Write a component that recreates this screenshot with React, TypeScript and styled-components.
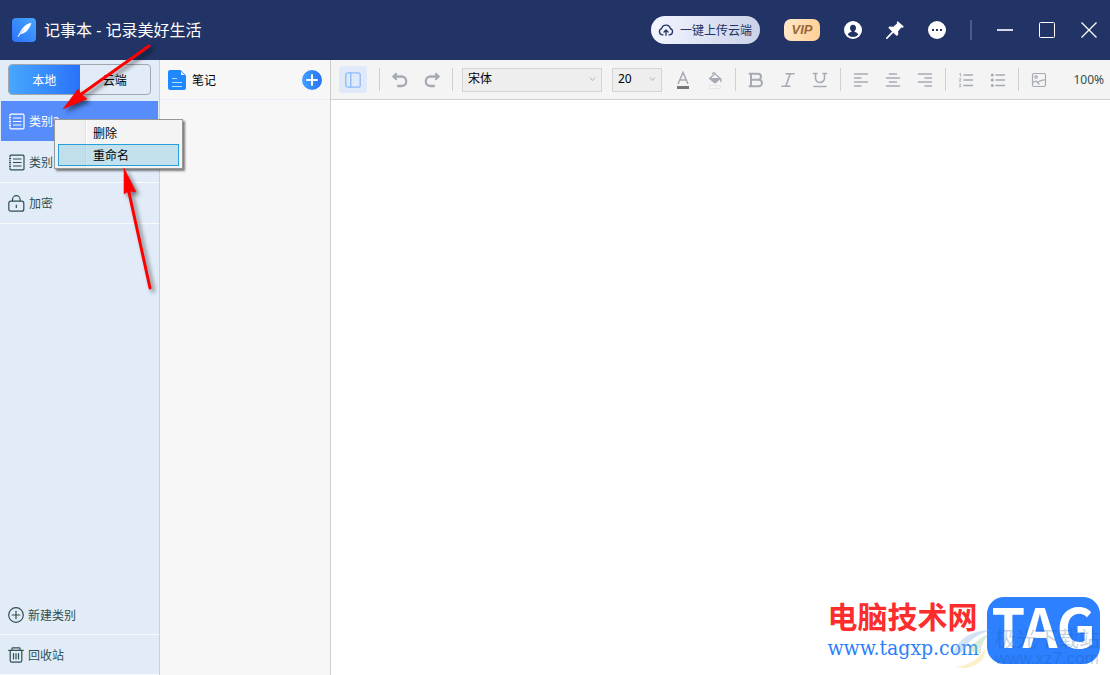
import React from "react";
import styled, { createGlobalStyle, css } from "styled-components";

const GlobalStyle = createGlobalStyle`
  * { box-sizing: border-box; }
  body {
    margin: 0;
    font-family: "Noto Sans", "Noto Sans CJK SC", sans-serif;
    font-size: 12px;
    line-height: 16px;
    color: #000;
  }
  button, select, textarea { font: inherit; color: inherit; margin: 0; }
  button { padding: 0; border: 0; background: none; cursor: pointer; }
  svg { display: block; flex: none; }
`;

const cjk = css`
  font-family: "Noto Sans CJK SC", sans-serif;
`;

const Window = styled.div`
  position: relative;
  display: flex;
  flex-direction: column;
  min-height: 100vh;
  overflow: hidden;
`;

/* ---------- title bar ---------- */

const TitleBar = styled.header`
  display: flex;
  align-items: center;
  height: 60px;
  padding: 0 13px 0 12px;
  background: #223365;
  color: #fff;
`;

const Title = styled.h1`
  margin: 0 auto 0 8px;
  font-size: 16px;
  line-height: 24px;
  font-weight: 400;
  white-space: nowrap;
`;

const HeaderActions = styled.div`
  display: flex;
  align-items: center;
  gap: 24px;
`;

const UploadButton = styled.button`
  ${cjk}
  display: flex;
  align-items: center;
  gap: 6px;
  height: 28px;
  padding: 0 8px 0 7px;
  border-radius: 14px;
  background: linear-gradient(90deg, #f3f5ff, #cbd2e8);
  color: #223365;
  white-space: nowrap;
`;

const VipButton = styled.button`
  width: 36px;
  height: 22px;
  border-radius: 7px;
  background: linear-gradient(100deg, #ffe8cb, #ffcf92);
  color: #97693a;
  font-family: "Liberation Sans", sans-serif;
  font-size: 13px;
  font-weight: 700;
  font-style: italic;
`;

const HeaderDivider = styled.span`
  width: 2px;
  height: 20px;
  margin-right: 1px;
  background: #4e5c84;
`;

const WindowControls = styled.div`
  display: flex;
  gap: 26px;
`;

/* ---------- columns ---------- */

const Body = styled.div`
  display: flex;
  flex: 1;
`;

const Sidebar = styled.aside`
  display: flex;
  flex-direction: column;
  flex: none;
  width: 160px;
  padding-top: 4px;
  border-right: 1px solid #cccfd6;
  background: #e2ecf8;
`;

const Tabs = styled.div`
  display: flex;
  height: 31px;
  margin: 0 8px 6px;
  border: 1px solid #a2a6af;
  border-radius: 4px;
  overflow: hidden;
`;

const Tab = styled.button<{ $active?: boolean }>`
  ${cjk}
  flex: 1;
  ${(p) =>
    p.$active &&
    css`
      background: linear-gradient(90deg, #47a8ff, #2a72f9);
      color: #fff;
    `}
`;

const List = styled.ul<{ $end?: boolean }>`
  list-style: none;
  margin: ${(p) => (p.$end ? "auto 0 0" : "0")};
  padding: 0;
`;

const Row = styled.button<{ $active?: boolean; $height: number }>`
  ${cjk}
  display: flex;
  align-items: center;
  gap: 4px;
  width: 100%;
  height: ${(p) => p.$height}px;
  padding-left: 8px;
  border-bottom: 1px solid ${(p) => (p.$active ? "#e2ecf8" : "#f8fbfe")};
  color: ${(p) => (p.$active ? "#fff" : "#2f4f4f")};
  background: ${(p) => (p.$active ? "#568dfa" : "transparent")};
  background-clip: padding-box;
  ${(p) =>
    p.$active &&
    css`
      border-left: 1px solid #e2ecf8;
      border-right: 1px solid #e2ecf8;
      padding-left: 7px;
    `}
`;

const NotesPanel = styled.section`
  flex: none;
  width: 171px;
  border-right: 1px solid #cccccc;
  background: #f7f7f7;
`;

const NotesHeader = styled.div`
  display: flex;
  align-items: center;
  height: 40px;
  padding: 0 8px;
  border-bottom: 1px solid #e6eef8;
`;

const NotesTitle = styled.h2`
  ${cjk}
  margin: 0 auto 0 6px;
  font-size: 12px;
  line-height: 16px;
  font-weight: 400;
`;

const Editor = styled.main`
  display: flex;
  flex-direction: column;
  flex: 1;
  min-width: 0;
`;

const Toolbar = styled.div`
  display: flex;
  align-items: center;
  gap: 9px;
  height: 40px;
  padding: 0 6px 0 8px;
  border-bottom: 1px solid #cfcfcf;
  background: #f4f4f4;
`;

const ToolGroup = styled.div`
  display: flex;
  align-items: center;
  gap: 10px;
`;

const ToolButton = styled.button`
  display: flex;
  align-items: center;
  justify-content: center;
  width: 22px;
  height: 24px;
  color: #a6aab3;
`;

const PanelToggle = styled(ToolButton)`
  width: 28px;
  height: 27px;
  margin-right: 3px;
  border-radius: 3px;
  background: #dfe9f9;
  color: #8cbcf8;
`;

const Divider = styled.span`
  width: 1px;
  height: 23px;
  background: #cfcfcf;
`;

const SelectBox = styled.div<{ $width: number }>`
  position: relative;
  width: ${(p) => p.$width}px;
  svg {
    position: absolute;
    right: 6px;
    top: 8px;
    pointer-events: none;
  }
`;

const Select = styled.select`
  appearance: none;
  display: block;
  width: 100%;
  height: 24px;
  padding: 0 5px 2px;
  border: 1px solid #d5d5d5;
  border-radius: 0;
  background: #eeeeee;
`;

const Zoom = styled.output`
  margin-left: auto;
  color: #2f4f4f;
`;

const Page = styled.textarea`
  flex: 1;
  padding: 12px;
  border: 0;
  outline: 0;
  resize: none;
  background: #fff;
`;

/* ---------- floating layers ---------- */

const Menu = styled.div`
  position: absolute;
  left: 54px;
  top: 119px;
  width: 129px;
  padding: 2px 3px;
  border: 1px solid #979797;
  background: linear-gradient(90deg, #f0f0f0 30px, #e0e0e0 30px, #e0e0e0 31px, #fff 31px, #fff 32px, #f4f4f4 32px);
  box-shadow: 2px 2px 2px rgba(0, 0, 0, 0.5);
`;

const MenuItem = styled.button<{ $hot?: boolean }>`
  ${cjk}
  display: block;
  width: 100%;
  height: 22px;
  padding-left: 34px;
  border: 1px solid ${(p) => (p.$hot ? "#26a0da" : "transparent")};
  background: ${(p) => (p.$hot ? "rgba(145, 204, 229, 0.5)" : "transparent")};
  text-align: left;
`;

const Arrows = styled.svg`
  position: absolute;
  left: 0;
  top: 0;
  pointer-events: none;
  filter: drop-shadow(3px 3px 2px rgba(0, 0, 0, 0.5));
`;

const Watermark = styled.div`
  position: absolute;
  right: 10px;
  bottom: 11px;
  display: flex;
  align-items: center;
  gap: 8px;
  pointer-events: none;
`;

const SiteName = styled.div`
  ${cjk}
  font-size: 30px;
  line-height: 34px;
  font-weight: 700;
  color: #fc2d2d;
  white-space: nowrap;
`;

const SiteUrl = styled.div`
  font-family: "DejaVu Serif Condensed", "Liberation Serif", serif;
  font-size: 21px;
  line-height: 32px;
  color: #2d7ff9;
  white-space: nowrap;
`;

const TagLogo = styled.div`
  ${cjk}
  display: flex;
  align-items: center;
  justify-content: center;
  width: 113px;
  height: 67px;
  padding-bottom: 12px;
  border-radius: 17px;
  background: #2d80ff;
  color: #fff;
  font-size: 54px;
  line-height: 64px;
  font-weight: 700;
`;

const GhostMark = styled.div`
  ${cjk}
  position: absolute;
  right: 0;
  bottom: -5px;
  display: flex;
  align-items: flex-end;
  color: rgba(20, 80, 150, 0.25);
  white-space: nowrap;
`;

const GhostName = styled.div`
  font-size: 21px;
  line-height: 24px;
`;

const GhostUrl = styled.div`
  font-family: "Liberation Sans", sans-serif;
  font-size: 17px;
  line-height: 20px;
`;

/* ---------- icons ---------- */

const Stroke = ({ size = 16, width = 2, children }: { size?: number; width?: number; children: React.ReactNode }) => (
  <svg
    width={size}
    height={size}
    viewBox="0 0 16 16"
    fill="none"
    stroke="currentColor"
    strokeWidth={width}
    strokeLinecap="round"
    strokeLinejoin="round"
    aria-hidden="true"
  >
    {children}
  </svg>
);

const AppLogo = () => (
  <svg width="24" height="24" viewBox="0 0 24 24" aria-hidden="true">
    <defs>
      <linearGradient id="logo" x1="0" y1="1" x2="1" y2="0">
        <stop offset="0" stopColor="#2a72f9" />
        <stop offset="1" stopColor="#48a7ff" />
      </linearGradient>
    </defs>
    <rect width="24" height="24" rx="4" fill="url(#logo)" />
    <path d="M5.500 18.700C7 16.500 7.800 14 9.800 11.200C12.300 7.800 15.800 5.300 19.300 4.800C19 7.500 17.300 10.300 15.500 12.300C13.300 14.800 10.800 16 8.300 16.200L6.200 18.900Z" fill="#fff" />
    <path d="M8 15.800L12 11.500" stroke="#5a97fc" strokeWidth="0.600" />
  </svg>
);

const CloudUp = () => (
  <Stroke width={1.3}>
    <path d="M5 12.800H4.200A3.200 3.200 0 0 1 3.600 6.600A4.500 4.500 0 0 1 12.400 6.600A3.200 3.200 0 0 1 11.800 12.800H11" />
    <path d="M8 13.200V8.200M6 10L8 8L10 10" />
  </Stroke>
);

const UserIcon = () => (
  <svg width="18" height="18" viewBox="0 0 18 18" aria-hidden="true">
    <circle cx="9" cy="9" r="9" fill="#fff" />
    <path d="M9 3.800C11 3.800 12 5.200 12 6.900C12 8.300 11.400 9.400 10.500 10V10.800C12.200 11.200 13.900 12 14.100 13.800C12.800 15.200 11 16 9 16S5.200 15.200 3.900 13.800C4.100 12 5.800 11.200 7.500 10.800V10C6.600 9.400 6 8.300 6 6.900C6 5.200 7 3.800 9 3.800Z" fill="#223365" />
  </svg>
);

const PinIcon = () => (
  <svg width="18" height="18" viewBox="0 0 18 18" fill="#fff" aria-hidden="true">
    <path d="M11.800 0.300L17.700 5.600L17 6.700L15.300 6.600L12.100 10.200L12.300 13.400L10.800 14.900L7.300 11.800L1.200 18L0 17.900L0.300 16.600L6.100 10.500L2.300 6.800L3.600 5.500L7.400 5.700L11 2.500L10.900 1Z" />
  </svg>
);

const DotsIcon = () => (
  <svg width="18" height="18" viewBox="0 0 18 18" aria-hidden="true">
    <circle cx="9" cy="9" r="9" fill="#fff" />
    <path d="M4 8h2v2H4zM8 8h2v2H8zM12 8h2v2h-2z" fill="#223365" />
  </svg>
);

const NotebookIcon = () => (
  <svg width="17" height="17" viewBox="0 0 17 17" fill="none" stroke="currentColor" strokeWidth="1.200" aria-hidden="true">
    <path d="M2 3.500V2.200A1 1 0 0 1 3 1.200H15A1 1 0 0 1 16 2.200V14.800A1 1 0 0 1 15 15.800H3A1 1 0 0 1 2 14.800V13.500M2 5.500V7.500M2 9.500V11.500" />
    <path d="M1 4.500H3M1 8.500H3M1 12.500H3" />
    <path d="M5 5H13.500M5 8.500H13.500M5 12H13.500" strokeWidth="1" />
  </svg>
);

const LockIcon = () => (
  <svg width="17" height="17" viewBox="0 0 17 17" fill="none" stroke="currentColor" strokeWidth="1.200" strokeLinecap="round" aria-hidden="true">
    <rect x="0.800" y="6.200" width="15" height="10" rx="2" />
    <path d="M4.500 6V4.500A3.800 3.800 0 0 1 12.100 4.500V6M8.300 10V12.500" />
  </svg>
);

const PlusCircle = () => (
  <Stroke width={1.2}>
    <circle cx="8" cy="8" r="7.300" />
    <path d="M8 4.200V11.800M4.200 8H11.800" />
  </Stroke>
);

const TrashIcon = () => (
  <Stroke width={1.2}>
    <path d="M0.800 3.400H15.200M4 3V1.500A0.700 0.700 0 0 1 4.700 0.800H11.300A0.700 0.700 0 0 1 12 1.500V3M2.200 3.600V13.500A1.700 1.700 0 0 0 3.900 15.200H12.100A1.700 1.700 0 0 0 13.800 13.500V3.600M5.500 6.500V12M8 6.500V12M10.500 6.500V12" />
  </Stroke>
);

const NoteIcon = () => (
  <svg width="18" height="20" viewBox="0 0 18 20" aria-hidden="true">
    <path d="M2 0H12.500L18 5.500V18A2 2 0 0 1 16 20H2A2 2 0 0 1 0 18V2A2 2 0 0 1 2 0Z" fill="#1e88ff" />
    <path d="M13 1.500V5H16.500Z" fill="#fff" />
    <path d="M4 8.500H9M4 12.500H14M4 16.500H14" stroke="#b9dcff" strokeWidth="1.200" />
  </svg>
);

const AddIcon = () => (
  <svg width="20" height="20" viewBox="0 0 20 20" aria-hidden="true">
    <defs>
      <linearGradient id="add" x1="0" y1="0" x2="1" y2="0">
        <stop offset="0" stopColor="#41a0ff" />
        <stop offset="1" stopColor="#2a72f9" />
      </linearGradient>
    </defs>
    <circle cx="10" cy="10" r="10" fill="url(#add)" />
    <path d="M10 5V15M5 10H15" stroke="#fff" strokeWidth="2" strokeLinecap="round" />
  </svg>
);

const Chevron = () => (
  <svg width="7" height="6" viewBox="0 0 7 6" fill="none" stroke="#b4b4b4" aria-hidden="true">
    <path d="M1 1.500L3.500 4.500L6 1.500" />
  </svg>
);

const Swoosh = () => (
  <svg width="42" height="40" viewBox="0 0 42 40" aria-hidden="true">
    <path d="M0 25C4 11 18 1 38 1C24 5 14 13 11 21C8 25 4 25 0 25Z" fill="#8fb8e8" opacity="0.400" />
    <path d="M14 25C18 15 28 8 36 5C30 12 27 18 28 25C23 22 18 22 14 25Z" fill="#9bd3a0" opacity="0.400" />
    <path d="M1 38C14 37 24 32 32 20C33 30 24 38 12 39Z" fill="#f0d56a" opacity="0.350" />
  </svg>
);

const toolIcons = {
  undo: <path d="M1.500 4.500H9.500A4.500 4.500 0 0 1 9.500 14H6M4 2L1.300 4.500L4 7" />,
  redo: <path d="M14.500 4.500H6.500A4.500 4.500 0 0 0 6.500 14H10M12 2L14.700 4.500L12 7" />,
  bold: <path d="M1.500 1.800H10A3 3 0 0 1 10 7.800H3M10 7.800H10.800A3.200 3.200 0 0 1 10.800 14.200H1.500M3 1.800V14.200" />,
  italic: <path d="M6 1.700H14M2 14.300H10M10.200 1.700L5.800 14.300" />,
  underline: <path d="M1.500 1.500H5M11 1.500H14.500M3.500 1.500V6A4.500 4.500 0 0 0 12.500 6V1.500M2 14.500H14" />,
  left: <path d="M1.500 2H14.500M1.500 6H8M1.500 10H14.500M1.500 14H8" />,
  center: <path d="M4.500 2H11.500M1.500 6H14.500M4.500 10H11.500M1.500 14H14.500" />,
  right: <path d="M1.500 2H14.500M8 6H14.500M1.500 10H14.500M8 14H14.500" />,
};

const Tool = ({ name, label, width = 1.6 }: { name: keyof typeof toolIcons; label: string; width?: number }) => (
  <ToolButton aria-label={label}>
    <Stroke width={width}>{toolIcons[name]}</Stroke>
  </ToolButton>
);

export default function App() {
  return (
    <Window>
      <GlobalStyle />
      <TitleBar>
        <AppLogo />
        <Title>记事本 - 记录美好生活</Title>
        <HeaderActions>
          <UploadButton>
            <CloudUp />
            一键上传云端
          </UploadButton>
          <VipButton>VIP</VipButton>
          <button aria-label="账户"><UserIcon /></button>
          <button aria-label="置顶"><PinIcon /></button>
          <button aria-label="更多"><DotsIcon /></button>
          <HeaderDivider />
          <WindowControls>
            <button aria-label="最小化">
              <svg width="16" height="16"><path d="M0 8H16" stroke="#d6d8e8" strokeWidth="2" /></svg>
            </button>
            <button aria-label="最大化">
              <svg width="16" height="16"><rect x="0.500" y="0.500" width="15" height="15" rx="1" fill="none" stroke="#fff" /></svg>
            </button>
            <button aria-label="关闭">
              <svg width="16" height="16"><path d="M0.500 0.500L15.500 15.500M15.500 0.500L0.500 15.500" stroke="#fff" strokeWidth="1.300" /></svg>
            </button>
          </WindowControls>
        </HeaderActions>
      </TitleBar>

      <Body>
        <Sidebar>
          <Tabs>
            <Tab $active>本地</Tab>
            <Tab>云端</Tab>
          </Tabs>
          <List>
            <li><Row $active $height={41}><NotebookIcon />类别2</Row></li>
            <li><Row $height={41}><NotebookIcon />类别1</Row></li>
            <li><Row $height={41}><LockIcon />加密</Row></li>
          </List>
          <List $end>
            <li><Row $height={40}><PlusCircle />新建类别</Row></li>
            <li><Row $height={40}><TrashIcon />回收站</Row></li>
          </List>
        </Sidebar>

        <NotesPanel>
          <NotesHeader>
            <NoteIcon />
            <NotesTitle>笔记</NotesTitle>
            <button aria-label="新建笔记"><AddIcon /></button>
          </NotesHeader>
        </NotesPanel>

        <Editor>
          <Toolbar>
            <PanelToggle aria-label="侧栏">
              <Stroke width={1.3}>
                <rect x="0.800" y="0.800" width="14.400" height="14.400" rx="2" />
                <path d="M5.800 1V15" />
              </Stroke>
            </PanelToggle>
            <Divider />
            <ToolGroup>
              <Tool name="undo" label="撤销" width={2.3} />
              <Tool name="redo" label="重做" width={2.3} />
            </ToolGroup>
            <Divider />
            <ToolGroup>
              <SelectBox $width={140}>
                <Select aria-label="字体"><option>宋体</option></Select>
                <Chevron />
              </SelectBox>
              <SelectBox $width={50}>
                <Select aria-label="字号"><option>20</option></Select>
                <Chevron />
              </SelectBox>
              <ToolButton aria-label="文字颜色">
                <svg width="14" height="18" viewBox="0 0 14 18" fill="none" stroke="currentColor" strokeWidth="1.500" aria-hidden="true">
                  <path d="M2 13L7 1.500L12 13M3.800 9H10.200" />
                  <path d="M1 16.500H13" stroke="#777" strokeWidth="3" />
                </svg>
              </ToolButton>
              <ToolButton aria-label="背景颜色">
                <svg width="14" height="18" viewBox="0 0 14 18" fill="none" stroke="currentColor" aria-hidden="true">
                  <path d="M4 3L6 1.500L12 7.500L7 12L1.500 7.500L6.500 3.200" strokeWidth="1.200" />
                  <path d="M2 7.500H12L7 12Z" fill="currentColor" />
                  <path d="M12.800 7V11" strokeWidth="1.300" />
                  <rect x="1.500" y="14.500" width="11" height="3" stroke="#e6e6e6" />
                </svg>
              </ToolButton>
            </ToolGroup>
            <Divider />
            <ToolGroup>
              <Tool name="bold" label="加粗" width={2} />
              <Tool name="italic" label="斜体" />
              <Tool name="underline" label="下划线" />
            </ToolGroup>
            <Divider />
            <ToolGroup>
              <Tool name="left" label="左对齐" />
              <Tool name="center" label="居中" />
              <Tool name="right" label="右对齐" />
            </ToolGroup>
            <Divider />
            <ToolGroup>
              <ToolButton aria-label="编号列表">
                <Stroke width={1.6}>
                  <path d="M6 3H14.500M6 8H14.500M6 13.500H14.500" />
                  <path d="M1.500 2L2.500 1.300V4.200M1.200 6.700H3L1.300 9.200H3.200M1.200 12H3L2 13.300L3 14.700H1.200" strokeWidth="0.800" />
                </Stroke>
              </ToolButton>
              <ToolButton aria-label="项目列表">
                <Stroke width={1.6}>
                  <path d="M6 3H14.500M6 8H14.500M6 13.500H14.500" />
                  <path d="M2.300 3V3M2.300 8V8M2.300 13.500V13.500" strokeWidth="3" />
                </Stroke>
              </ToolButton>
            </ToolGroup>
            <Divider />
            <ToolButton aria-label="插入图片">
              <Stroke width={1.2}>
                <rect x="1.500" y="1.500" width="13" height="13" rx="1.500" />
                <circle cx="5" cy="5" r="1.200" />
                <path d="M1.800 10.500L5 9L8 12M6.500 10.500C9 9 10 7.500 14.200 7.800" />
              </Stroke>
            </ToolButton>
            <Zoom>100%</Zoom>
          </Toolbar>
          <Page aria-label="笔记内容" />
        </Editor>
      </Body>

      <Menu role="menu">
        <MenuItem role="menuitem">删除</MenuItem>
        <MenuItem role="menuitem" $hot>重命名</MenuItem>
      </Menu>

      <Arrows width="200" height="300" fill="#fe0000" stroke="#fe0000" aria-hidden="true">
        <path d="M149 46L80 95M150 288L128 188" strokeWidth="3" fill="none" strokeLinecap="round" />
        <path d="M63 109L78 89L81 94L87 99ZM124 168L124 194L129 191L136 192Z" strokeWidth="0.500" />
      </Arrows>

      <Watermark>
        <div>
          <SiteName>电脑技术网</SiteName>
          <SiteUrl>www.tagxp.com</SiteUrl>
        </div>
        <TagLogo>TAG</TagLogo>
        <GhostMark>
          <Swoosh />
          <div>
            <GhostName>极光下载站</GhostName>
            <GhostUrl>www.xz7.com</GhostUrl>
          </div>
        </GhostMark>
      </Watermark>
    </Window>
  );
}
